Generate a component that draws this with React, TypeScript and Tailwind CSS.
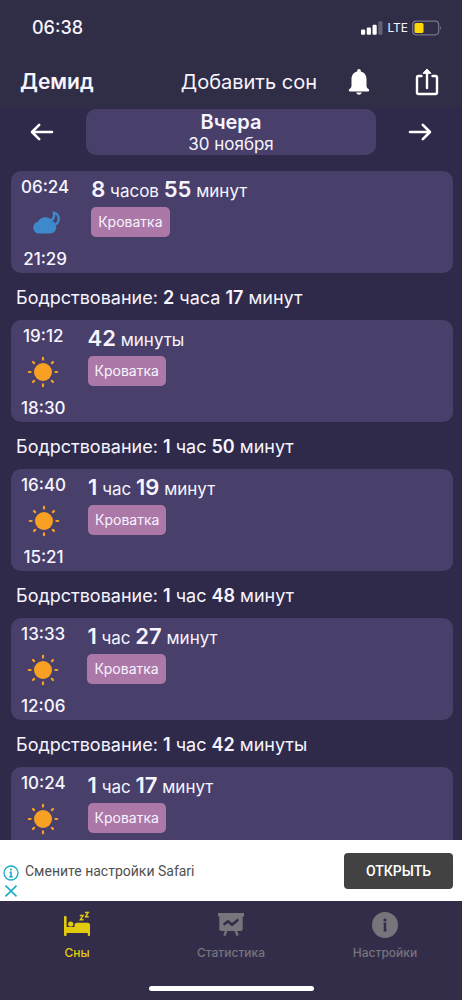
import { Fragment } from "react";
import type { ReactNode } from "react";

type Sleep = {
  end: string;
  start?: string;
  night?: boolean;
  duration: string;
  place: string;
  awake?: string;
};

const sleeps: Sleep[] = [
  { end: "06:24", start: "21:29", night: true, duration: "8 часов 55 минут", place: "Кроватка", awake: "2 часа 17 минут" },
  { end: "19:12", start: "18:30", duration: "42 минуты", place: "Кроватка", awake: "1 час 50 минут" },
  { end: "16:40", start: "15:21", duration: "1 час 19 минут", place: "Кроватка", awake: "1 час 48 минут" },
  { end: "13:33", start: "12:06", duration: "1 час 27 минут", place: "Кроватка", awake: "1 час 42 минуты" },
  { end: "10:24", duration: "1 час 17 минут", place: "Кроватка" },
];

// Numbers are emphasised, the words between them are not
function Duration({ text, numberClass }: { text: string; numberClass: string }) {
  return (
    <>
      {text.split(" ").map((part, i) => (
        <Fragment key={i}>
          {i > 0 && " "}
          {/^\d+$/.test(part) ? <b className={numberClass}>{part}</b> : part}
        </Fragment>
      ))}
    </>
  );
}

function SunIcon() {
  return (
    <svg viewBox="0 0 32 32" className="size-8" aria-hidden="true">
      <circle cx="16" cy="16" r="9" fill="#f7a023" />
      <g stroke="#f7a023" strokeWidth="2.2" strokeLinecap="round">
        <path d="M16 1.8v1.800M16 28.400v1.800M1.800 16h1.800M28.400 16h1.800M6 6l1.100 1.100M24.900 24.900L26 26M6 26l1.100-1.100M24.900 7.100L26 6" />
      </g>
    </svg>
  );
}

function CloudMoonIcon() {
  return (
    <svg viewBox="0 0 32 32" className="size-8" fill="#3e88cc" aria-hidden="true">
      <path d="M10 26.500a5.900 5.900 0 0 1-1-11.700 8.300 8.300 0 0 1 14.700-.2 6.200 6.200 0 0 1 3.500 5.700c0 3.500-2.600 6.200-6.200 6.200z" />
      <path
        fillRule="evenodd"
        d="M23.300 4.200c4.700.3 7.700 3.600 7.700 7.500 0 3.200-1.900 6.100-4.800 7.300l-1.500-3.600-3.700-2.700c2.900-1.600 3.600-4.700 2.300-8.500zM26.300 7.300c.1 3-.8 5.300-2.600 6.700l2.600 2.300c3-2.500 3-6.600 0-9z"
      />
    </svg>
  );
}

function BellIcon() {
  return (
    <svg viewBox="0 0 24 28" className="h-7 w-6" fill="#fff" aria-hidden="true">
      <path d="M12 1c1 0 1.800.8 1.800 1.800v.6c3.700.8 5.700 4 5.700 7.600v6.500c0 1.700.8 2.900 2.300 3.800.6.400.5 2.200-.5 2.200H2.700c-1 0-1.100-1.800-.5-2.200 1.500-.9 2.300-2.100 2.300-3.800V11c0-3.600 2-6.800 5.700-7.600v-.6C10.200 1.800 11 1 12 1z" />
      <path d="M9.300 24.600h5.400c-.2 1.300-1.200 2.200-2.700 2.200s-2.500-.9-2.700-2.200z" />
    </svg>
  );
}

function ShareIcon() {
  return (
    <svg viewBox="0 0 24 28" className="h-7 w-6" fill="none" stroke="#fff" strokeWidth="2.400" aria-hidden="true">
      <path d="M6.500 8H3.500C2.500 8 2 8.500 2 9.500v15c0 1 .5 1.500 1.500 1.500h17c1 0 1.500-.5 1.500-1.500v-15c0-1-.5-1.500-1.500-1.500h-3" strokeLinecap="round" />
      <path d="M12 20V4" strokeLinecap="round" />
      <path d="M12 1l4 4.300H8z" fill="#fff" stroke="#fff" strokeWidth="1" strokeLinejoin="round" />
    </svg>
  );
}

function ArrowIcon({ className = "" }: { className?: string }) {
  return (
    <svg viewBox="0 0 24 20" className={`h-5 w-6 ${className}`} fill="none" stroke="#fff" strokeWidth="2.600" strokeLinecap="round" strokeLinejoin="round" aria-hidden="true">
      <path d="M2 10h20M14.800 2.800L22 10l-7.200 7.200" />
    </svg>
  );
}

function BedIcon() {
  return (
    <svg viewBox="0 0 28 28" className="size-7" fill="currentColor" aria-hidden="true">
      <path d="M1 6c0-1.200 2.600-1.200 2.600 0v10H27v8.200c0 1.100-2.200 1.100-2.200 0V22H3.600v2.200c0 1.100-2.600 1.100-2.600 0z" />
      <path d="M11.500 14.300c0-1.600 1-2.500 2.500-2.500h10.500c1.600 0 2.500 1 2.500 2.500V18H11.500z" />
      <circle cx="7.700" cy="13" r="2.600" />
      <path d="M16.800 4.500h3.200l-2.700 4.300h3.200M22 1.500h3.200l-2.700 4.300h3.200" fill="none" stroke="currentColor" strokeWidth="1.400" />
    </svg>
  );
}

function ChartBoardIcon() {
  return (
    <svg viewBox="0 0 28 28" className="size-7" aria-hidden="true">
      <path d="M1 2h26v3.500h-1.300v12.800a1.700 1.700 0 0 1-1.700 1.700h-3.900l1.600 4.300-2.200.8L17.600 20h-7.200l-1.900 5.100-2.200-.8L7.900 20H4a1.700 1.700 0 0 1-1.700-1.700V5.500H1z" fill="currentColor" />
      <path d="M7.500 13l3.500-2.700 4 3.500 5.500-4.600" fill="none" stroke="#342d4a" strokeWidth="2.600" strokeLinecap="round" strokeLinejoin="round" />
    </svg>
  );
}

function InfoIcon() {
  return (
    <svg viewBox="0 0 28 28" className="size-7" aria-hidden="true">
      <circle cx="14" cy="14" r="13" fill="currentColor" />
      <circle cx="14" cy="9" r="1.600" fill="#342d4a" />
      <path d="M12.600 12.800H14v6.400M12.600 19.400h3" fill="none" stroke="#342d4a" strokeWidth="2.400" />
    </svg>
  );
}

function StatusBar() {
  return (
    <div className="flex h-14 items-center justify-between pr-5 pl-8">
      <span className="text-lg font-medium">06:38</span>
      <div className="flex items-center gap-1">
        <svg viewBox="0 0 21 13" className="h-3.5 w-5.5" fill="#fff" aria-hidden="true">
          <rect x="0" y="8" width="4" height="5" rx="1" />
          <rect x="5.500" y="6" width="4" height="7" rx="1" />
          <rect x="11" y="3.500" width="4" height="9.500" rx="1" />
          <rect x="16.500" y="0" width="4" height="13" rx="1" opacity=".25" />
        </svg>
        <span className="text-xs">LTE</span>
        <svg viewBox="0 0 30 15" className="h-4 w-7.5" aria-hidden="true">
          <rect x=".7" y=".7" width="26" height="13.600" rx="3.500" fill="none" stroke="#77748a" strokeWidth="1.200" />
          <rect x="2.500" y="2.500" width="9" height="10" rx="1.500" fill="#ffd60a" />
          <path d="M28.200 5.500v4c1.200-.4 1.200-3.600 0-4z" fill="#77748a" />
        </svg>
      </div>
    </div>
  );
}

function SleepCard({ sleep }: { sleep: Sleep }) {
  return (
    <article className="flex h-[102px] shrink-0 gap-[22px] rounded-[10px] bg-[#48406a] px-2.5">
      <div className="flex flex-col items-center pt-1 text-[17px] leading-6 font-medium">
        <time>{sleep.end}</time>
        <span className="my-2">{sleep.night ? <CloudMoonIcon /> : <SunIcon />}</span>
        {sleep.start && <time>{sleep.start}</time>}
      </div>
      <div>
        <p className="pt-1 text-[17px] leading-8">
          <Duration text={sleep.duration} numberClass="align-baseline text-[22px] leading-7 font-semibold" />
        </p>
        <span className="flex h-[30px] w-fit items-center rounded-[5px] bg-[#ab78a7] px-[7px] pb-px text-sm">{sleep.place}</span>
      </div>
    </article>
  );
}

function Tab({ icon, label, active = false }: { icon: ReactNode; label: string; active?: boolean }) {
  return (
    <button
      type="button"
      className={`flex flex-1 flex-col items-center gap-1.5 text-xs font-medium ${active ? "text-[#e2cb0c]" : "text-[#77747c]"}`}
    >
      {icon}
      {label}
    </button>
  );
}

export default function App() {
  return (
    <div className="flex h-screen flex-col overflow-hidden bg-[#2f2a49] font-[Inter,sans-serif] text-[#f7f4ff]">
      <header className="shrink-0 bg-[#302d46]">
        <StatusBar />
        <div className="flex h-13 items-center px-5">
          <h1 className="flex-1 text-[21px] font-semibold">Демид</h1>
          <button type="button" className="text-xl">Добавить сон</button>
          <button type="button" aria-label="Уведомления" className="ml-[30px]">
            <BellIcon />
          </button>
          <button type="button" aria-label="Поделиться" className="mr-[3px] ml-11">
            <ShareIcon />
          </button>
        </div>
      </header>

      <nav className="flex shrink-0 items-center justify-between px-[30px] pt-px">
        <button type="button" aria-label="Предыдущий день">
          <ArrowIcon className="rotate-180" />
        </button>
        <button type="button" className="mx-8 flex h-[46px] flex-1 flex-col items-center justify-center rounded-[10px] bg-[#48406a]">
          <span className="text-xl leading-6 font-semibold">Вчера</span>
          <span className="text-[17px] leading-5">30 ноября</span>
        </button>
        <button type="button" aria-label="Следующий день">
          <ArrowIcon />
        </button>
      </nav>

      <main className="flex min-h-0 flex-1 flex-col overflow-hidden pt-4 pr-[9px] pl-[11px]">
        {sleeps.map((sleep) => (
          <Fragment key={sleep.end}>
            <SleepCard sleep={sleep} />
            {sleep.awake && (
              <p className="shrink-0 px-[5px] pt-[11px] pb-2 text-lg leading-7">
                Бодрствование: <Duration text={sleep.awake} numberClass="font-semibold" />
              </p>
            )}
          </Fragment>
        ))}
      </main>

      <aside className="flex h-[61px] shrink-0 items-center bg-white pr-[9px] pl-[3px]">
        <div className="flex flex-col gap-1 self-end pb-1">
          <svg viewBox="0 0 16 16" className="size-4" fill="none" stroke="#18adc4" aria-hidden="true">
            <circle cx="8" cy="8" r="7" strokeWidth="1.300" />
            <path d="M8 3.600v1.800M6.500 7.200H8v4.300M6.200 11.800h3.600" strokeWidth="1.600" />
          </svg>
          <button type="button" aria-label="Закрыть рекламу">
            <svg viewBox="0 0 16 12" className="h-3 w-4" fill="none" stroke="#18adc4" strokeWidth="1.600" aria-hidden="true">
              <path d="M2.500.7l11 10.600M13.500.7l-11 10.600" />
            </svg>
          </button>
        </div>
        <p className="ml-1.5 flex-1 font-[Roboto,sans-serif] text-sm text-[#505050]">Смените настройки Safari</p>
        <button type="button" className="h-9 w-[109px] rounded-[4px] bg-[#424242] font-[Roboto,sans-serif] text-sm font-medium text-white">
          ОТКРЫТЬ
        </button>
      </aside>

      <footer className="flex h-[99px] shrink-0 flex-col items-center justify-between bg-[#342d4a] pt-2.5 pb-[9px]">
        <nav className="flex w-full">
          <Tab icon={<BedIcon />} label="Сны" active />
          <Tab icon={<ChartBoardIcon />} label="Статистика" />
          <Tab icon={<InfoIcon />} label="Настройки" />
        </nav>
        <div className="h-[5px] w-[165px] rounded-full bg-white" />
      </footer>
    </div>
  );
}
